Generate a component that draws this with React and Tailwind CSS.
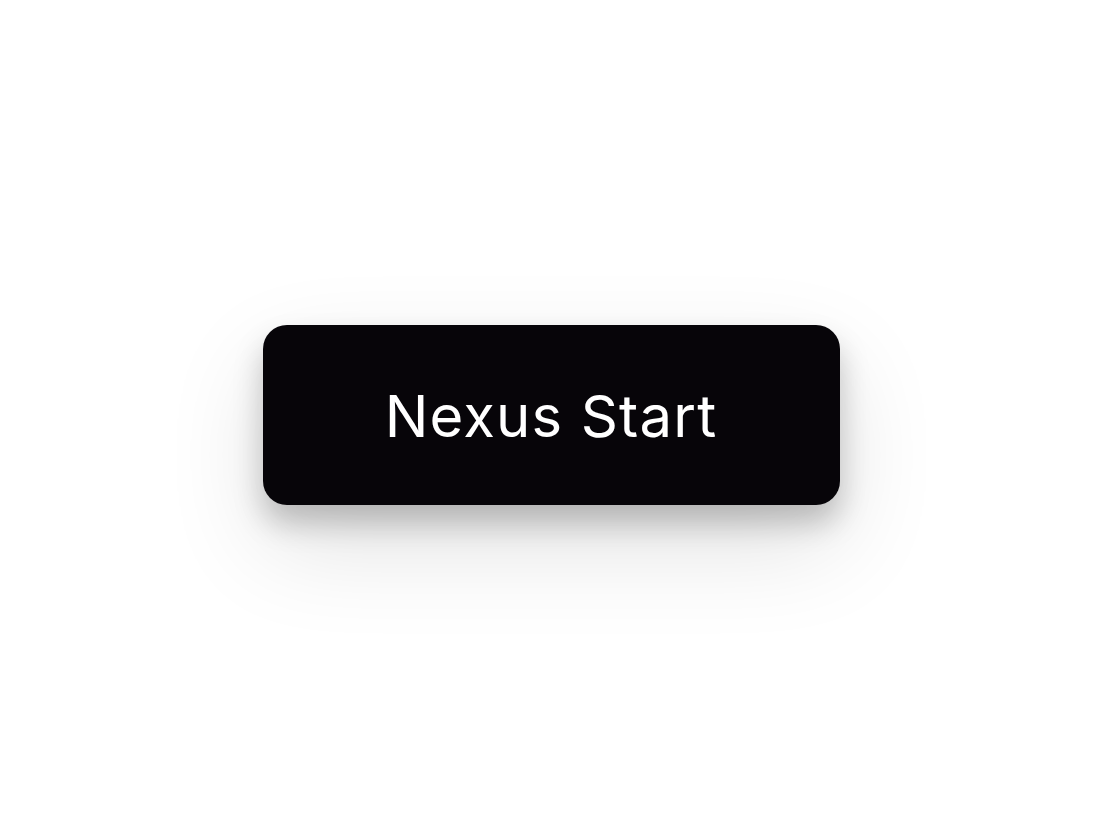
export default function App() {
  return (
    <div className="flex h-screen w-full items-center justify-center bg-white">
      <button
        type="button"
        className="ml-[2px] mt-[5px] flex h-[180px] w-[577px] items-center justify-center rounded-[24px] bg-[#070509] pt-[2px] text-[58px] font-normal tracking-[0.02em] text-white shadow-[0_18px_30px_rgba(0,0,0,0.22),0_40px_100px_rgba(0,0,0,0.12)] [font-family:Inter,'Noto_Sans',sans-serif]"
      >
        Nexus Start
      </button>
    </div>
  )
}
